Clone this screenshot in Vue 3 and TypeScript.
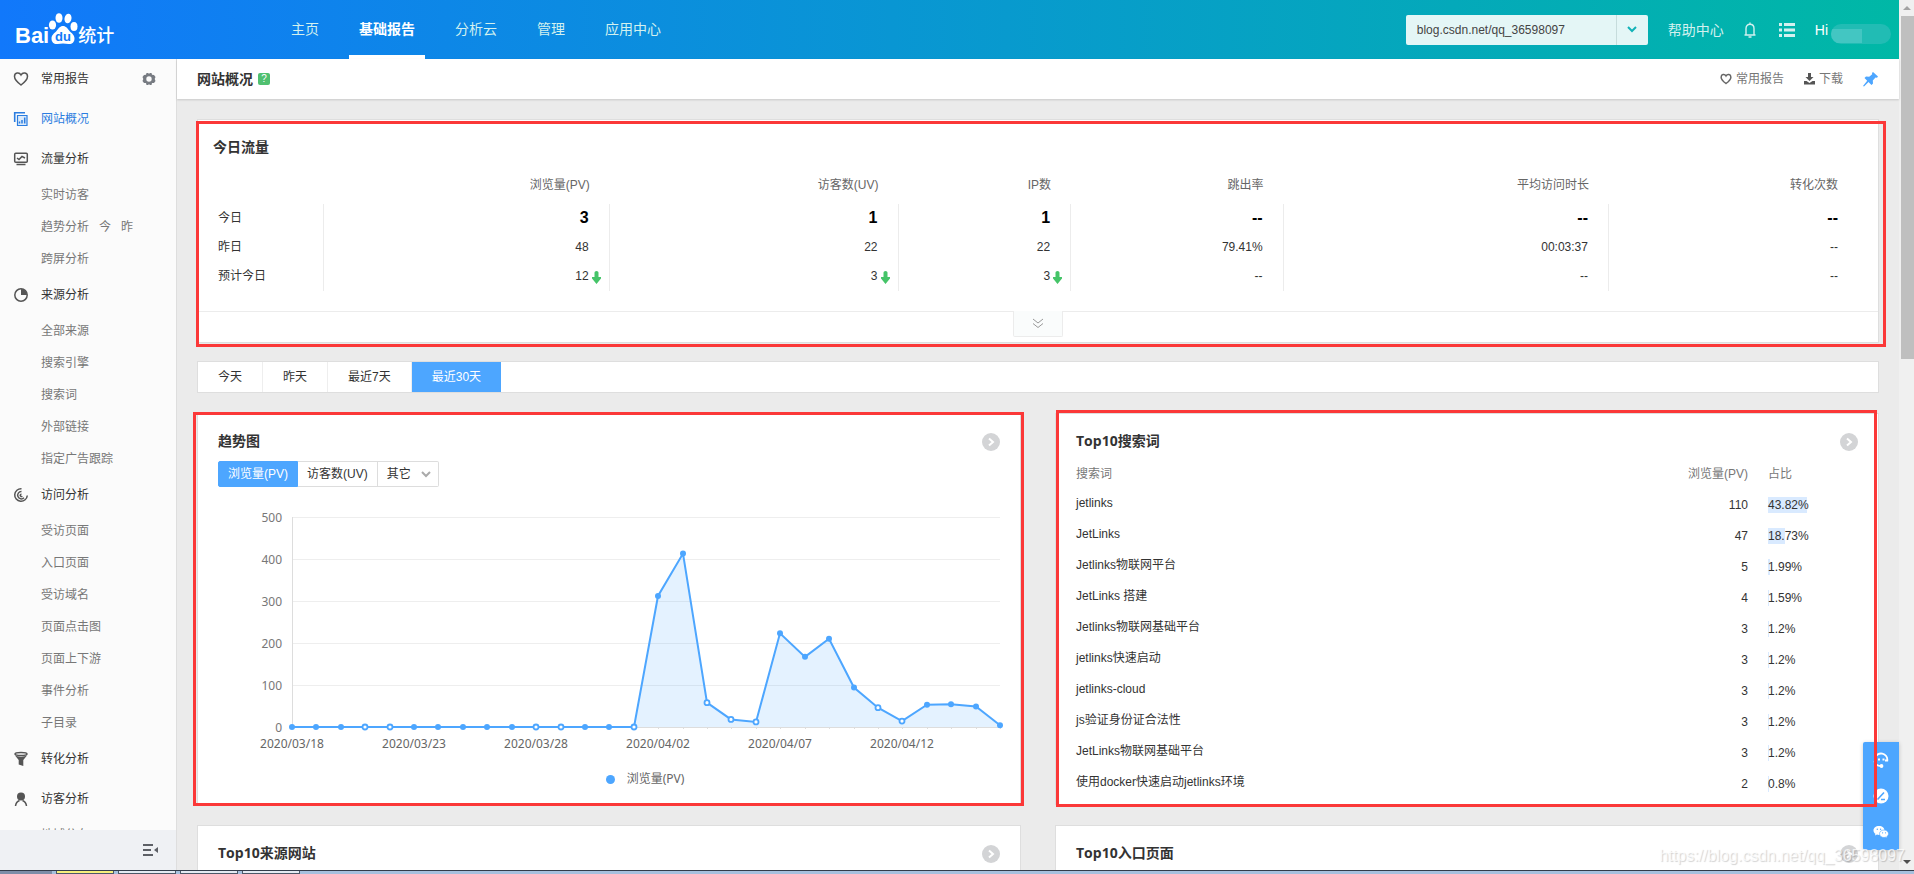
<script setup lang="ts">
import { computed, onBeforeUnmount, onMounted, ref } from 'vue'

interface SubItem {
  label: string
  extra?: string[]
}
interface MenuGroup {
  label: string
  icon: string
  active?: boolean
  gear?: boolean
  children?: SubItem[]
}

const navItems = ['主页', '基础报告', '分析云', '管理', '应用中心']
const activeNav = ref('基础报告')
const sites = ['blog.csdn.net/qq_36598097']
const site = ref(sites[0])

const sub = (...labels: string[]): SubItem[] => labels.map((label) => ({ label }))
const menu: MenuGroup[] = [
  { label: '常用报告', icon: 'heart', gear: true },
  { label: '网站概况', icon: 'overview', active: true },
  {
    label: '流量分析',
    icon: 'monitor',
    children: [{ label: '实时访客' }, { label: '趋势分析', extra: ['今', '昨'] }, { label: '跨屏分析' }],
  },
  { label: '来源分析', icon: 'pie', children: sub('全部来源', '搜索引擎', '搜索词', '外部链接', '指定广告跟踪') },
  {
    label: '访问分析',
    icon: 'radar',
    children: sub('受访页面', '入口页面', '受访域名', '页面点击图', '页面上下游', '事件分析', '子目录'),
  },
  { label: '转化分析', icon: 'funnel' },
  { label: '访客分析', icon: 'person', children: sub('地域分布') },
]

const trafficHeads = ['浏览量(PV)', '访客数(UV)', 'IP数', '跳出率', '平均访问时长', '转化次数']
const trafficRows = [
  { label: '今日', strong: true, cells: ['3', '1', '1', '--', '--', '--'] },
  { label: '昨日', cells: ['48', '22', '22', '79.41%', '00:03:37', '--'] },
  { label: '预计今日', forecast: true, cells: ['12', '3', '3', '--', '--', '--'] },
]

const ranges = ['今天', '昨天', '最近7天', '最近30天']
const activeRange = ref('最近30天')

const words = [
  { word: 'jetlinks', pv: 110, share: 43.82 },
  { word: 'JetLinks', pv: 47, share: 18.73 },
  { word: 'Jetlinks物联网平台', pv: 5, share: 1.99 },
  { word: 'JetLinks 搭建', pv: 4, share: 1.59 },
  { word: 'Jetlinks物联网基础平台', pv: 3, share: 1.2 },
  { word: 'jetlinks快速启动', pv: 3, share: 1.2 },
  { word: 'jetlinks-cloud', pv: 3, share: 1.2 },
  { word: 'js验证身份证合法性', pv: 3, share: 1.2 },
  { word: 'JetLinks物联网基础平台', pv: 3, share: 1.2 },
  { word: '使用docker快速启动jetlinks环境', pv: 2, share: 0.8 },
]

const values = [
  0, 0, 0, 0, 0, 0, 0, 0, 0, 0, 0, 0, 0, 0, 0, 312, 413, 58, 18, 12, 223, 167, 210, 94, 46, 14, 53, 54, 49, 4,
]
const hollow = new Set([3, 4, 10, 11, 14, 17, 18, 19, 24, 25])
const dateLabels = ['2020/03/18', '2020/03/23', '2020/03/28', '2020/04/02', '2020/04/07', '2020/04/12']
const left = 74
const top = 10
const base = 220

const chartBox = ref<HTMLElement | null>(null)
const chartWidth = ref(782)
let observer: ResizeObserver | undefined
onMounted(() => {
  if (!chartBox.value) return
  chartWidth.value = chartBox.value.clientWidth
  observer = new ResizeObserver(() => {
    if (chartBox.value) chartWidth.value = chartBox.value.clientWidth
  })
  observer.observe(chartBox.value)
})
onBeforeUnmount(() => observer?.disconnect())

const step = computed(() => (chartWidth.value - left) / (values.length - 1))
const points = computed(() =>
  values.map((v, i) => ({
    x: Math.round(left + i * step.value),
    y: base - (v / 500) * (base - top),
    open: hollow.has(i),
  })),
)
const line = computed(() => points.value.map((p) => `${p.x},${p.y}`).join(' '))
const area = computed(() => `${left},${base} ${line.value} ${chartWidth.value},${base}`)
const gridLines = [500, 400, 300, 200, 100, 0].map((v, i) => ({ v, y: top + i * 42 }))
</script>

<template>
  <div class="shell">
    <div class="viewport">
      <div class="app">
        <header class="header">
          <a class="logo" href="#" aria-label="Baidu">
            <span class="logo-latin">Bai</span>
            <svg class="paw" width="30" height="32" viewBox="0 0 30 32">
              <g fill="#fff">
                <ellipse cx="4.500" cy="12" rx="3.600" ry="4.600" />
                <ellipse cx="11" cy="5" rx="3.500" ry="4.800" />
                <ellipse cx="20" cy="5.500" rx="3.500" ry="4.800" transform="rotate(10 20 5.500)" />
                <ellipse cx="26" cy="13.500" rx="3.500" ry="4.500" />
                <path d="M15 13c3 0 4.500 2.500 6.500 5 2.500 2.500 5 4 5 7.500 0 4-3 6-6 5.500-2-.3-3.500-.6-5.500-.6s-3.500.3-5.500.6c-3 .5-6-1.500-6-5.500 0-3.500 2.500-5 5-7.500 2-2.500 3.500-5 6.500-5z" />
              </g>
              <text x="15" y="28" text-anchor="middle" class="paw-text">du</text>
            </svg>
            <span class="logo-cn">统计</span>
          </a>
          <nav class="nav">
            <a v-for="n in navItems" :key="n" href="#" :class="{ on: n === activeNav }" @click.prevent="activeNav = n">{{ n }}</a>
          </nav>
          <div class="site">
            <select v-model="site" aria-label="网站">
              <option v-for="s in sites" :key="s">{{ s }}</option>
            </select>
            <span class="site-arrow">
              <svg width="10" height="7" viewBox="0 0 10 7"><path d="M1 1l4 4 4-4" fill="none" stroke="#12b3b8" stroke-width="2" /></svg>
            </span>
          </div>
          <a class="help" href="#">帮助中心</a>
          <button class="plain bell" aria-label="通知">
            <svg width="12" height="16" viewBox="0 0 12 16" fill="none" stroke="#d3f1ef" stroke-width="1.400">
              <path d="M.5 13h11M2 13V6.500C2 4 3.500 2.300 6 2.300S10 4 10 6.500V13M6 .5v1.800M4.500 15h3" />
            </svg>
          </button>
          <button class="plain list" aria-label="列表">
            <svg width="16" height="14" viewBox="0 0 16 14" fill="#d3f1ef">
              <path d="M0 0h3v3H0zM5 0h11v3H5zM0 5.500h3v3H0zM5 5.500h11v3H5zM0 11h3v3H0zM5 11h11v3H5z" />
            </svg>
          </button>
          <span class="hi">Hi</span>
          <span class="mask"><i></i></span>
        </header>

        <div class="body">
          <aside class="side">
            <div class="menu">
              <template v-for="g in menu" :key="g.label">
                <div class="group" :class="{ on: g.active }">
                  <svg class="icon" width="16" height="16" viewBox="0 0 16 16" fill="none" stroke="currentColor" stroke-width="1.500">
                    <path v-if="g.icon === 'heart'" d="M8 14C4 11 1.500 8.500 1.500 5.500c0-4 4.800-4.700 6.500-1.500 1.700-3.200 6.500-2.500 6.500 1.500C14.500 8.500 12 11 8 14z" />
                    <g v-else-if="g.icon === 'overview'" stroke-width="1.200">
                      <path d="M12 1.700H1.700V11" stroke-width="1.600" />
                      <path d="M4.500 4.500h9.500v10H4.500z" fill="#dcebfb" />
                      <path d="M6.500 12.500v-2M9 12.500V9M11.700 12.500V6.500" stroke-width="1.500" />
                    </g>
                    <g v-else-if="g.icon === 'monitor'">
                      <rect x="1.700" y="2.200" width="12.600" height="9" rx="1" />
                      <path d="M4 7l2 1.500L9 5.500 12 7M3.500 13.500h9" />
                    </g>
                    <g v-else-if="g.icon === 'pie'">
                      <circle cx="8" cy="8" r="6.200" />
                      <path d="M8 8V2a6 6 0 0 1 6 6z" fill="currentColor" stroke="none" />
                    </g>
                    <path v-else-if="g.icon === 'radar'" d="M8.500 1.700A6.300 6.300 0 1 0 14.300 8.500M8.500 4.500A3.700 3.700 0 1 0 11 10.800M8.500 7.200a1.200 1.200 0 1 0 .8 2" />
                    <g v-else-if="g.icon === 'funnel'">
                      <ellipse cx="8" cy="3" rx="6" ry="1.500" />
                      <path d="M2 4.500c3 1.500 9 1.500 12 0L10.300 9v6L5.700 13.500V9z" fill="currentColor" stroke="none" />
                    </g>
                    <g v-else>
                      <circle cx="8" cy="5.500" r="4" fill="currentColor" stroke="none" />
                      <path d="M2.500 15c.3-2.500 1.500-4.500 4-5.500M13.500 15c-.3-2.500-1.500-4.500-4-5.500" />
                    </g>
                  </svg>
                  <a href="#">{{ g.label }}</a>
                  <svg v-if="g.gear" class="gear" width="14" height="14" viewBox="0 0 14 14">
                    <path fill="#777b82" fill-rule="evenodd" d="M4.500 1h1.700L7 2l.8-1h1.700l.5 1.800 2 .1 1.500 2-.8 2 .8 2-1.500 2-2 .1-.5 1.900H7.800l-.8-1-.8 1H4.500L4 11l-2-.1-1.500-2 .8-2-.8-2L2 2.900l2-.1zM7 4.300a2.700 2.700 0 1 0 0 5.400 2.700 2.700 0 0 0 0-5.400z" />
                  </svg>
                </div>
                <div v-for="c in g.children" :key="c.label" class="sub">
                  <a href="#">{{ c.label }}</a>
                  <a v-for="e in c.extra" :key="e" href="#">{{ e }}</a>
                </div>
              </template>
            </div>
            <div class="fold">
              <button class="plain" aria-label="收起">
                <svg width="15" height="12" viewBox="0 0 15 12" fill="#5d6066">
                  <path d="M0 0h10v2H0zM0 5h8v2H0zM0 10h10v2H0zM15 3v6l-4-3z" />
                </svg>
              </button>
            </div>
          </aside>

          <main class="main">
            <div class="titlebar">
              <h1>网站概况</h1>
              <span class="tip">?</span>
              <a class="tool fav" href="#">
                <svg width="12" height="12" viewBox="0 0 16 16" fill="none" stroke="#666" stroke-width="2"><path d="M8 14C4 11 1.500 8.500 1.500 5.500c0-4 4.800-4.700 6.500-1.500 1.700-3.200 6.500-2.500 6.500 1.500C14.500 8.500 12 11 8 14z" /></svg>
                常用报告
              </a>
              <a class="tool" href="#">
                <svg width="11" height="12" viewBox="0 0 11 12" fill="#555"><path d="M4 0h3v4h2.500l-4 4-4-4H4zM0 8h2.500l3 2 3-2H11v3.500H0z" /></svg>
                下载
              </a>
              <button class="plain pin" aria-label="固定">
                <svg width="16" height="16" viewBox="0 0 16 16" fill="#4da6ff"><path d="M10 1l5 4.500-1 1.200-1.500-.2-2.700 3 .2 3-1.500 1.500-3-3L1 15.500 0 15l4.200-5.200L1.500 7 3 5.500l3.200.2 3-2.500L9 2z" /></svg>
              </button>
            </div>

            <div class="content">
              <section class="card today">
                <h2>今日流量</h2>
                <table class="traffic">
                  <thead>
                    <tr>
                      <th></th>
                      <th v-for="h in trafficHeads" :key="h">{{ h }}</th>
                    </tr>
                  </thead>
                  <tbody>
                    <tr v-for="r in trafficRows" :key="r.label" :class="{ strong: r.strong }">
                      <th scope="row">{{ r.label }}</th>
                      <td v-for="(c, i) in r.cells" :key="i">
                        {{ c }}<svg v-if="r.forecast && i < 3" class="down" width="9" height="13" viewBox="0 0 9 13"><path fill="#45c468" d="M2.500 1.500Q2.500 0 4.500 0t2 1.500V6H9v1.500L4.500 13 0 7.500V6h2.500z" /></svg>
                      </td>
                    </tr>
                  </tbody>
                </table>
                <div class="foot">
                  <button aria-label="展开">
                    <svg width="12" height="11" viewBox="0 0 12 11" fill="none" stroke="#999"><path d="M1 1l5 4 5-4M1 5.500l5 4 5-4" /></svg>
                  </button>
                </div>
              </section>

              <div class="ranges">
                <button v-for="r in ranges" :key="r" :class="{ on: r === activeRange }" @click="activeRange = r">{{ r }}</button>
              </div>

              <div class="grid">
                <section class="card trend">
                  <div class="head">
                    <h2>趋势图</h2>
                    <button class="more" aria-label="更多"><svg width="18" height="18" viewBox="0 0 18 18"><circle cx="9" cy="9" r="9" fill="#d3d4d6" /><path d="M7 5.500l4 3.500-4 3.500" fill="none" stroke="#fff" stroke-width="2" /></svg></button>
                  </div>
                  <div class="metrics">
                    <button class="on">浏览量(PV)</button>
                    <button>访客数(UV)</button>
                    <button class="other">
                      其它
                      <svg width="10" height="7" viewBox="0 0 10 7"><path d="M1 1l4 4 4-4" fill="none" stroke="#aaa" stroke-width="2" /></svg>
                    </button>
                  </div>
                  <div ref="chartBox" class="chart">
                    <svg :width="chartWidth" height="245">
                      <g shape-rendering="crispEdges">
                        <line v-for="g in gridLines" :key="g.v" :x1="left" :x2="chartWidth" :y1="g.y" :y2="g.y" :stroke="g.v ? '#eee' : '#ddd'" />
                        <line v-for="(p, i) in points" :key="i" :x1="p.x" :x2="p.x" :y1="base" :y2="base + 2" stroke="#ddd" />
                        <line :x1="left" :x2="left" :y1="top" :y2="base" stroke="#ddd" />
                      </g>
                      <polygon :points="area" fill="#4da6ff" fill-opacity=".15" />
                      <polyline :points="line" fill="none" stroke="#4da6ff" stroke-width="2" />
                      <circle v-for="(p, i) in points" :key="i" :cx="p.x" :cy="p.y" :r="p.open ? 2.5 : 3" :fill="p.open ? '#fff' : '#4da6ff'" :stroke="p.open ? '#4da6ff' : 'none'" stroke-width="1.800" />
                      <text v-for="g in gridLines" :key="g.v" class="ylab" :x="left - 10" :y="g.y + 5">{{ g.v }}</text>
                      <text v-for="(d, i) in dateLabels" :key="d" class="xlab" :x="points[i * 5].x" :y="base + 21">{{ d }}</text>
                    </svg>
                  </div>
                  <div class="legend"><i></i>浏览量(PV)</div>
                </section>

                <section class="card search">
                  <div class="head">
                    <h2>Top10搜索词</h2>
                    <button class="more" aria-label="更多"><svg width="18" height="18" viewBox="0 0 18 18"><circle cx="9" cy="9" r="9" fill="#d3d4d6" /><path d="M7 5.500l4 3.500-4 3.500" fill="none" stroke="#fff" stroke-width="2" /></svg></button>
                  </div>
                  <table class="words">
                    <thead>
                      <tr><th>搜索词</th><th class="pv">浏览量(PV)</th><th class="share">占比</th></tr>
                    </thead>
                    <tbody>
                      <tr v-for="w in words" :key="w.word">
                        <td class="word">{{ w.word }}</td>
                        <td class="pv">{{ w.pv }}</td>
                        <td class="share">
                          <div class="track"><i :style="{ width: w.share + '%' }"></i><span>{{ w.share }}%</span></div>
                        </td>
                      </tr>
                    </tbody>
                  </table>
                </section>

                <section v-for="t in ['Top10来源网站', 'Top10入口页面']" :key="t" class="card">
                  <div class="head">
                    <h2>{{ t }}</h2>
                    <button class="more" aria-label="更多"><svg width="18" height="18" viewBox="0 0 18 18"><circle cx="9" cy="9" r="9" fill="#d3d4d6" /><path d="M7 5.500l4 3.500-4 3.500" fill="none" stroke="#fff" stroke-width="2" /></svg></button>
                  </div>
                </section>
              </div>
            </div>
          </main>
        </div>

        <div class="float">
          <button aria-label="客服">
            <svg width="16" height="16" viewBox="0 0 16 16" fill="none" stroke="#fff" stroke-width="1.800">
              <path d="M2 6a6.300 6.300 0 0 1 12.300 2.500H12M1.500 9c.5 3.500 3.500 5 6.500 5" /><circle cx="8.500" cy="14" r="1" /><path d="M5 7.500h2M9.500 7.500h2" />
            </svg>
          </button>
          <button aria-label="反馈">
            <svg width="16" height="16" viewBox="0 0 16 16"><circle cx="8" cy="8" r="7.500" fill="#fff" /><path d="M4.500 11.500l6.500-7M8 11.500h4" stroke="#4da6ff" stroke-width="1.600" /></svg>
          </button>
          <button aria-label="微信">
            <svg width="16" height="14" viewBox="0 0 16 14">
              <path d="M6 1C2.700 1 .5 3 .5 5.500c0 1.400.7 2.500 1.900 3.300L2 10.500l2-1 2 .4C9.300 9.900 11.500 8 11.500 5.500S9.300 1 6 1z" fill="#fff" />
              <path d="M11 5C8.300 5 6.500 6.700 6.500 8.800s2 3.700 4.500 3.700l1.600-.3 1.600.8-.4-1.500c1.200-.7 1.700-1.700 1.700-2.800C15.500 6.600 13.500 5 11 5z" fill="#fff" stroke="#4da6ff" stroke-width=".6" />
              <g fill="#4da6ff"><circle cx="4.300" cy="4.300" r=".7" /><circle cx="7.600" cy="4.300" r=".7" /><circle cx="9.600" cy="7.800" r=".6" /><circle cx="12.500" cy="7.800" r=".6" /></g>
            </svg>
          </button>
        </div>
      </div>
      <div class="scroll">
        <i class="up"></i>
        <div class="thumb"></div>
        <i class="dn"></i>
      </div>
    </div>
    <div class="taskbar"><i class="start"></i><i class="yellow"></i><i></i><i></i><i></i></div>
    <div class="watermark">https://blog.csdn.net/qq_36598097</div>
  </div>
</template>

<style>
body {
  margin: 0;
}
</style>

<style scoped>
* {
  box-sizing: border-box;
}
.shell {
  position: relative;
  display: flex;
  flex-direction: column;
  height: 100vh;
  overflow: hidden;
  background: #ebebeb;
  color: #333;
  font: 12px/16px 'Liberation Sans', 'Noto Sans CJK SC', sans-serif;
}
a {
  color: inherit;
  text-decoration: none;
}
button {
  border: 0;
  padding: 0;
  background: none;
  color: inherit;
  font: inherit;
  cursor: pointer;
}
svg {
  display: block;
  flex: none;
}
h1,
h2 {
  margin: 0;
  font-family: 'Open Sans', 'Noto Sans CJK SC', sans-serif;
  font-size: 14px;
  font-weight: 700;
}
.viewport {
  display: flex;
  flex: 1;
  min-height: 0;
}
.app {
  position: relative;
  display: flex;
  flex: 1;
  flex-direction: column;
  min-width: 0;
}
.header {
  display: flex;
  flex: none;
  align-items: center;
  height: 59px;
  padding: 0 8px 0 15px;
  background: linear-gradient(90deg, #1178fb, #00b8a6);
  color: #d3f1ef;
  font-size: 14px;
}
.logo {
  display: flex;
  align-items: center;
  width: 256px;
  padding-top: 12px;
  color: #fff;
}
.logo-latin {
  font-size: 22px;
  font-weight: 700;
}
.paw {
  margin: -14px 0 0 -1px;
}
.paw-text {
  fill: #1179f8;
  font-size: 13px;
  font-weight: 700;
}
.logo-cn {
  font-size: 18px;
  font-weight: 500;
}
.nav {
  display: flex;
  flex: 1;
  align-self: stretch;
}
.nav a {
  padding: 0 10px;
  margin: 0 10px;
  line-height: 58px;
}
.nav a.on {
  border-bottom: 4px solid #fff;
  color: #fff;
  font-weight: 700;
}
.site {
  position: relative;
  width: 242px;
  height: 30px;
  margin-right: 20px;
}
.site select {
  width: 100%;
  height: 30px;
  padding: 0 11px;
  border: 0;
  border-radius: 2px;
  background: #e4f6f6;
  color: #444;
  font: 12px 'Liberation Sans', sans-serif;
  appearance: none;
}
.site-arrow {
  position: absolute;
  top: 0;
  right: 0;
  bottom: 0;
  display: flex;
  align-items: center;
  justify-content: center;
  width: 32px;
  border-left: 1px solid #c6dcdc;
  pointer-events: none;
}
.bell {
  margin: 0 23px 0 20px;
}
.list {
  margin-right: 20px;
}
.hi {
  color: #fff;
}
.mask {
  width: 60px;
  height: 20px;
  margin: 8px 0 0 3px;
  border-radius: 10px;
  background: #21bcb4;
  overflow: hidden;
}
.mask i {
  display: block;
  width: 31px;
  height: 14px;
  margin-top: 5px;
  background: #43c6c2;
}
.body {
  display: flex;
  flex: 1;
  min-height: 0;
}
.side {
  display: flex;
  flex: none;
  flex-direction: column;
  width: 177px;
  border-right: 1px solid #dedede;
  background: #fbfbfb;
}
.menu {
  flex: 1;
  min-height: 0;
  overflow: hidden;
}
.group {
  display: flex;
  align-items: center;
  height: 40px;
  padding: 0 20px 0 13px;
  color: #333;
}
.group .icon {
  margin-right: 12px;
  color: #555;
}
.group.on,
.group.on .icon {
  color: #2b7de0;
}
.gear {
  margin-left: auto;
}
.sub {
  display: flex;
  gap: 10px;
  align-items: center;
  height: 32px;
  padding-left: 41px;
  color: #777;
}
.fold {
  display: flex;
  flex: none;
  align-items: center;
  justify-content: flex-end;
  height: 40px;
  padding-right: 18px;
  background: #eff1f4;
}
.main {
  display: flex;
  flex: 1;
  flex-direction: column;
  min-width: 0;
}
.titlebar {
  display: flex;
  flex: none;
  align-items: center;
  height: 40px;
  padding: 0 20px;
  background: #fff;
  box-shadow: 0 1px 2px rgba(0, 0, 0, 0.15);
}
.tip {
  width: 12px;
  margin-left: 5px;
  border-radius: 2px;
  background: #50c070;
  color: #fff;
  font-size: 10px;
  line-height: 12px;
  text-align: center;
}
.tool {
  display: flex;
  gap: 4px;
  align-items: center;
  margin-right: 20px;
  color: #777;
}
.fav {
  margin-left: auto;
}
.content {
  flex: 1;
  min-height: 0;
  padding: 20px 20px 0;
  overflow: hidden;
}
.card {
  position: relative;
  border: 1px solid #dedede;
  background: #fff;
}
.today::after,
.trend::after,
.search::after {
  position: absolute;
  z-index: 10;
  border: 3px solid #fb3838;
  content: '';
  pointer-events: none;
}
.today::after {
  inset: 1px -8px -5px -2px;
}
.trend::after {
  inset: -2px -4px -2px -5px;
}
.search::after {
  inset: -4px 1px -3px 0;
}
.today h2 {
  padding: 8px 15px 0;
  line-height: 38px;
}
.traffic {
  width: calc(100% - 20px);
  margin-bottom: 20px;
  border-collapse: separate;
  border-spacing: 0;
  table-layout: fixed;
}
.traffic th,
.traffic td {
  height: 29px;
  padding: 0 20px 2px 0;
  font-weight: 400;
  text-align: right;
  white-space: nowrap;
}
.traffic thead th {
  height: 38px;
  padding-bottom: 0;
  color: #666;
}
.traffic th:nth-child(1) {
  width: 7.6%;
}
.traffic th:nth-child(2) {
  width: 17.2%;
}
.traffic th:nth-child(3) {
  width: 17.4%;
}
.traffic th:nth-child(4) {
  width: 10.4%;
}
.traffic th:nth-child(5) {
  width: 12.8%;
}
.traffic th:nth-child(6) {
  width: 19.6%;
}
.traffic tbody th {
  padding-left: 20px;
  border-right: 1px solid #ececec;
  text-align: left;
}
.traffic td:not(:last-child) {
  border-right: 1px solid #ececec;
}
.traffic .strong td {
  color: #000;
  font-size: 16px;
  font-weight: 700;
}
.down {
  display: inline-block;
  margin: 0 -12px 0 3px;
  vertical-align: -4px;
}
.foot {
  height: 31px;
  border-top: 1px solid #ececec;
}
.foot button {
  display: flex;
  align-items: center;
  justify-content: center;
  width: 50px;
  height: 26px;
  margin: -1px auto 0;
  border: 1px solid #ececec;
  border-top: 0;
  border-radius: 0 0 2px 2px;
  background: #fafcfc;
}
.ranges {
  display: flex;
  margin: 18px 0 20px;
  border: 1px solid #dedede;
  background: #fff;
}
.ranges button {
  height: 30px;
  padding: 0 20px;
  border-right: 1px solid #eee;
}
.ranges .on {
  border-right: 0;
  background: #4da6ff;
  color: #fff;
}
.grid {
  display: grid;
  grid-template-columns: 1fr 1fr;
  gap: 20px 34px;
}
.grid .card {
  padding: 16px 20px 5px;
}
.head {
  display: flex;
  align-items: center;
  justify-content: space-between;
  height: 24px;
}
.head h2 {
  padding-bottom: 3px;
}
.more {
  border-radius: 50%;
}
.metrics {
  display: flex;
  height: 26px;
  margin-top: 7px;
}
.metrics button {
  padding: 0 9px;
  border: 1px solid #ddd;
  border-left: 0;
}
.metrics .on {
  border-color: #4da6ff;
  border-left: 1px solid #4da6ff;
  border-radius: 2px 0 0 2px;
  background: #4da6ff;
  color: #fff;
}
.metrics .other {
  display: flex;
  gap: 10px;
  align-items: center;
  padding-right: 7px;
  border-radius: 0 2px 2px 0;
}
.chart {
  height: 245px;
  margin-top: 20px;
}
.chart svg {
  overflow: visible;
}
.chart text {
  font: 12px 'Noto Sans', sans-serif;
}
.chart .ylab {
  fill: #777;
  text-anchor: end;
}
.chart .xlab {
  fill: #666;
  text-anchor: middle;
}
.legend {
  display: flex;
  gap: 12px;
  align-items: center;
  justify-content: center;
  height: 16px;
  margin-top: 19px;
  padding-left: 72px;
  color: #666;
  font-family: 'Noto Sans', 'Noto Sans CJK SC', sans-serif;
}
.legend i {
  width: 9px;
  height: 9px;
  border-radius: 50%;
  background: #4da6ff;
}
.words {
  width: 100%;
  border-spacing: 0;
}
.words th,
.words td {
  height: 31px;
  padding: 0;
  text-align: left;
}
.words th {
  height: 35px;
  padding-top: 4px;
  color: #777;
  font-weight: 400;
}
.words .word {
  padding-bottom: 3px;
}
.words .pv {
  padding-right: 20px;
  text-align: right;
}
.words .share {
  width: 90px;
}
.track {
  display: grid;
}
.track i,
.track span {
  grid-area: 1 / 1;
}
.track i {
  background: #d9eaff;
}
.float {
  position: absolute;
  right: 0;
  bottom: 20px;
  z-index: 5;
  border-radius: 2px 0 0 2px;
  background: #4da6ff;
  box-shadow: 0 1px 4px rgba(0, 0, 0, 0.2);
}
.float button {
  display: flex;
  align-items: center;
  justify-content: center;
  width: 36px;
  height: 36px;
}
.scroll {
  display: flex;
  flex: none;
  flex-direction: column;
  align-items: center;
  width: 15px;
  padding: 6px 0;
  background: #f0f0f0;
}
.scroll i {
  flex: none;
  border: 4px solid transparent;
}
.scroll .up {
  border-top: 0;
  border-bottom-color: #a3a3a3;
}
.scroll .dn {
  margin-top: auto;
  border-bottom: 0;
  border-top-color: #505050;
}
.thumb {
  align-self: stretch;
  height: 40%;
  margin: 6px 0 0 2px;
  background: #bfbfbf;
}
.taskbar {
  display: flex;
  flex: none;
  gap: 4px;
  height: 4px;
  border-top: 1px solid #333c4a;
  background: #a6c0de;
}
.taskbar i {
  width: 58px;
  border: 1px solid #4c5868;
  border-top: 0;
  background: #e3eaf3;
}
.taskbar .start {
  width: 52px;
  border: 0;
  background: #7d8da8;
}
.taskbar .yellow {
  background: #f7ef7c;
}
.watermark {
  position: absolute;
  right: 9px;
  bottom: 8px;
  z-index: 20;
  color: rgba(255, 255, 255, 0.75);
  font-size: 16px;
  line-height: 20px;
  text-shadow: 1px 1px 1px rgba(0, 0, 0, 0.18);
  pointer-events: none;
}
</style>
